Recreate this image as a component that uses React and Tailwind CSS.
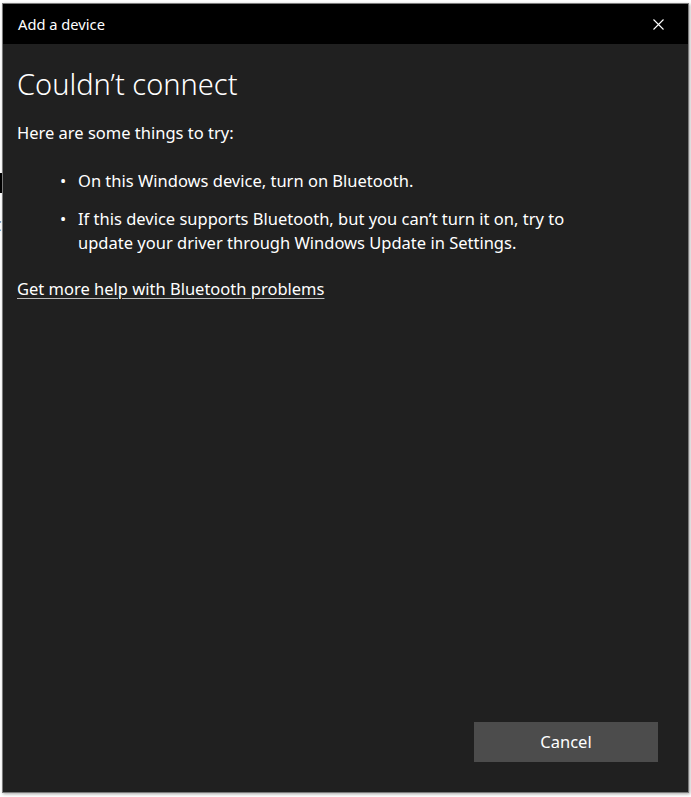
import React from 'react';

export default function App() {
    return (
        <div className="relative w-[691px] h-[797px] bg-white overflow-hidden" style={{ fontFamily: '"Noto Sans", "Open Sans", sans-serif' }}>
            {/* settings page peeking out behind the dialog */}
            <div className="absolute left-[-4px] top-[-26px] text-[30px] text-black leading-none">other devices</div>
            <div className="absolute left-0 top-[173px] w-[3px] h-[20px] bg-black" />
            <div className="absolute left-[-8px] top-[214px] text-[15px] text-[#333]">C</div>
            <div className="absolute left-[-6px] top-[360px] text-[15px] text-[#333]">t</div>
            <div className="absolute left-[-8px] top-[400px] text-[13px] text-[#777] leading-[17px]">c<br />c<br />c</div>

            <div className="pl-[2px] pt-[3px]">
                <div className="relative w-[687px] h-[790px] border border-[#7a7a7a] bg-[#202020] flex flex-col shadow-[1px_1px_3px_rgba(0,0,0,0.35)]">
                    <div className="h-[40px] bg-black flex items-center justify-between pl-[15px] pr-[24px] shrink-0">
                        <span className="text-white text-[14.7px]">Add a device</span>
                        <svg width="11" height="11" viewBox="0 0 11 11" className="text-white">
                            <path d="M0.5 0.5 L10.5 10.5 M10.5 0.5 L0.5 10.5" stroke="currentColor" strokeWidth="1.1" />
                        </svg>
                    </div>

                    <div className="flex-1 flex flex-col px-[14px] text-white">
                        <h1 className="text-[29px] font-light leading-none mt-[25px]">Couldn’t connect</h1>
                        <p className="text-[16.5px] mt-[23px]">Here are some things to try:</p>
                        <ul className="mt-[23px] flex flex-col gap-[14px] text-[16.5px] leading-[24px]">
                            <li className="flex">
                                <span className="w-[61px] pl-[43px]">•</span>
                                <span>On this Windows device, turn on Bluetooth.</span>
                            </li>
                            <li className="flex">
                                <span className="w-[61px] pl-[43px]">•</span>
                                <span>If this device supports Bluetooth, but you can’t turn it on, try to<br />update your driver through Windows Update in Settings.</span>
                            </li>
                        </ul>
                        <a className="mt-[22px] text-[16.5px] underline underline-offset-[3px] decoration-[#bbb] self-start">Get more help with Bluetooth problems</a>

                        <div className="mt-auto mb-[30px] flex justify-end pr-[16px]">
                            <button className="w-[184px] h-[40px] bg-[#4c4c4c] text-white text-[16.5px] pt-[1px]">Cancel</button>
                        </div>
                    </div>
                </div>
            </div>
        </div>
    );
}
